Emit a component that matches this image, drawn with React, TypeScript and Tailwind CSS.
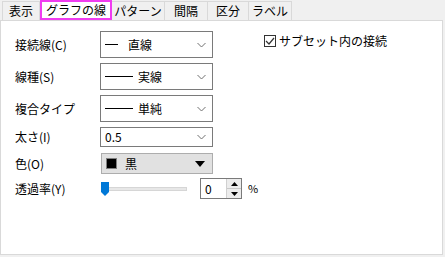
import React from 'react'

const font = { fontFamily: '"Noto Sans CJK JP", "Noto Sans", sans-serif' }

const tabs = ['表示', 'グラフの線', 'パターン', '間隔', '区分', 'ラベル']
const tabW = [37, 72, 53, 43, 41, 43]

function Chevron() {
  return (
    <svg width="9" height="6" viewBox="0 0 9 6" className="shrink-0">
      <path d="M0.5 1 L4.5 5 L8.5 1" fill="none" stroke="#707070" strokeWidth="1" />
    </svg>
  )
}

function Select({ line, gap = 5, text, h = 27 }: { line?: number; gap?: number; text: string; h?: number }) {
  return (
    <div
      className="w-[113px] shrink-0 border border-[#7a7a7a] bg-white flex items-center pl-[4px] pr-[6px]"
      style={{ height: h }}
    >
      {line ? <div className="h-px bg-black" style={{ width: line }} /> : null}
      <span className="text-[12px] leading-none text-black" style={{ marginLeft: line ? gap : 0 }}>
        {text}
      </span>
      <div className="flex-1" />
      <Chevron />
    </div>
  )
}

function Row({ label, children, h, mt }: { label: string; children: React.ReactNode; h: number; mt: number }) {
  return (
    <div className="flex items-center" style={{ height: h, marginTop: mt }}>
      <div className="w-[99px] shrink-0 pl-[14px] text-[12px] leading-none text-black">{label}</div>
      {children}
    </div>
  )
}

export default function App() {
  return (
    <div className="w-[445px] h-[257px] bg-[#f0f0f0] overflow-hidden" style={font}>
      <div className="flex h-[20px] pl-[2px]">
        {tabs.map((t, i) =>
          i === 1 ? (
            <div
              key={t}
              className="h-[20px] border-2 border-[#f03cf0] bg-white flex items-center justify-center text-[12px] text-black relative z-10"
              style={{ width: tabW[i] }}
            >
              {t}
            </div>
          ) : (
            <div
              key={t}
              className="h-[19px] mt-[1px] border border-b-0 border-[#d9d9d9] bg-[#f0f0f0] flex items-center justify-center text-[12px] text-black -ml-px first:ml-0"
              style={{ width: tabW[i] + 1 }}
            >
              {t}
            </div>
          )
        )}
      </div>
      <div className="w-[443px] h-[235px] border border-[#d9d9d9] bg-white">
        <div className="flex">
          <div className="w-[250px] shrink-0">
            <Row label="接続線(C)" h={27} mt={10}>
              <Select line={13} gap={10} text="直線" />
            </Row>
            <Row label="線種(S)" h={27} mt={5}>
              <Select line={28} text="実線" />
            </Row>
            <Row label="複合タイプ" h={27} mt={5}>
              <Select line={28} text="単純" />
            </Row>
            <Row label="太さ(I)" h={20} mt={5}>
              <Select text="0.5" h={20} />
            </Row>
            <Row label="色(O)" h={21} mt={6}>
              <div className="w-[112px] h-[21px] border border-[#adadad] bg-[#e1e1e1] flex items-center pl-[4px] pr-[7px] ml-px">
                <div className="w-[11px] h-[11px] border border-[#808080] bg-black" />
                <span className="ml-[8px] text-[12px] leading-none text-black">黒</span>
                <div className="flex-1" />
                <svg width="10" height="6" viewBox="0 0 10 6">
                  <path d="M0 0 H10 L5 6 Z" fill="#000" />
                </svg>
              </div>
            </Row>
            <Row label="透過率(Y)" h={21} mt={4}>
              <div className="relative w-[86px] h-[14px] flex items-center ml-px shrink-0">
                <div className="w-full h-[4px] bg-[#e7e7e7] border border-[#d6d6d6]" />
                <svg className="absolute left-0 top-0" width="8" height="14" viewBox="0 0 8 14">
                  <path d="M0 0 H8 V10 L4 14 L0 10 Z" fill="#0078d7" />
                </svg>
              </div>
              <div className="ml-[13px] w-[42px] h-[21px] border border-[#7a7a7a] flex bg-white shrink-0">
                <span className="flex-1 text-[12px] leading-none text-black pl-[4px] flex items-center">0</span>
                <div className="w-[15px] flex flex-col border-l border-[#d0d0d0] bg-[#ececec]">
                  <div className="flex-1 flex items-center justify-center border-b border-[#c8c8c8]">
                    <svg width="7" height="4" viewBox="0 0 7 4"><path d="M0 4 H7 L3.5 0 Z" fill="#000" /></svg>
                  </div>
                  <div className="flex-1 flex items-center justify-center">
                    <svg width="7" height="4" viewBox="0 0 7 4"><path d="M0 0 H7 L3.5 4 Z" fill="#000" /></svg>
                  </div>
                </div>
              </div>
              <span className="ml-[6px] text-[11px] leading-none text-black">%</span>
            </Row>
          </div>
          <div className="ml-[13px] mt-[14px] flex items-start">
            <div className="w-[12px] h-[12px] border border-[#333] bg-white flex items-center justify-center">
              <svg width="10" height="8" viewBox="0 0 10 8">
                <path d="M1 4 L4 7 L9 1" fill="none" stroke="#333" strokeWidth="1.2" />
              </svg>
            </div>
            <span className="ml-[3px] text-[12px] leading-[12px] text-black">サブセット内の接続</span>
          </div>
        </div>
      </div>
    </div>
  )
}
